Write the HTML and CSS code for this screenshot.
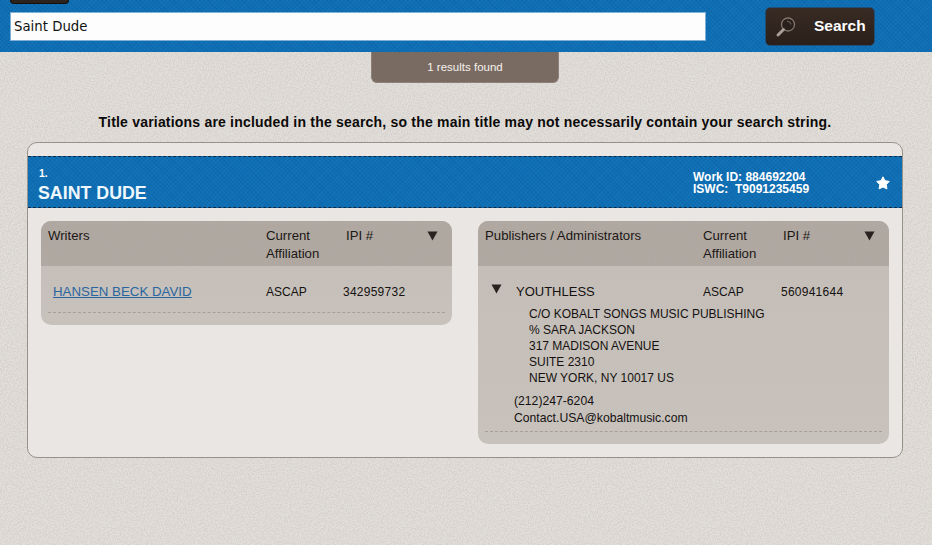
FILE: index.html
```html
<!DOCTYPE html>
<html lang="en">
<head>
<meta charset="utf-8">
<title>Saint Dude - Search</title>
<link rel="stylesheet" href="styles.css">
</head>
<body>
<header class="topbar">
  <div class="top-tab"></div>
  <form class="search-row">
    <input class="search-input" type="text" value="Saint Dude">
    <button class="search-btn" type="button">
      <svg class="lens" width="22" height="24" viewBox="0 0 22 24">
        <circle cx="13" cy="9.500" r="6.500" fill="#2a201b" stroke="#80766e" stroke-width="1.300"/>
        <path d="M12 6.500a3.500 3.500 0 0 1 4 3" fill="none" stroke="#665c55" stroke-width="1.200"/>
        <path d="M8.500 14.500 3 20" stroke="#a89f96" stroke-width="3" stroke-linecap="round"/>
      </svg>
      <span>Search</span>
    </button>
  </form>
</header>
<div class="results-wrap"><div class="results-tab">1 results found</div></div>
<p class="notice">Title variations are included in the search, so the main title may not necessarily contain your search string.</p>
<main class="card">
  <section class="band">
    <div class="band-title">
      <div class="num">1.</div>
      <h1>SAINT DUDE</h1>
    </div>
    <div class="ids">
      <div>Work ID: 884692204</div>
      <div>ISWC:&nbsp; T9091235459</div>
    </div>
    <svg class="star" width="14" height="14" viewBox="0 0 14 14"><path d="M7 .8 9 4.700l4.300.7-3 3.100.6 4.400L7 11l-3.900 1.900.6-4.400-3-3.100L5 4.700z" fill="#fff" stroke="#fff" stroke-linejoin="round"/></svg>
  </section>
  <div class="panels">
    <section class="panel">
      <div class="panel-head">
        <div class="h-name">Writers</div>
        <div class="h-aff">Current<br>Affiliation</div>
        <div class="h-ipi">IPI #</div>
        <svg class="tri" width="11" height="10" viewBox="0 0 12 10" preserveAspectRatio="none"><path d="M.5 .5h11L6 9.500z" fill="#2a221e"/></svg>
      </div>
      <div class="panel-body">
        <div class="row">
          <a class="writer" href="#">HANSEN BECK DAVID</a>
          <div class="aff">ASCAP</div>
          <div class="ipi">342959732</div>
        </div>
      </div>
    </section>
    <section class="panel">
      <div class="panel-head">
        <div class="h-name">Publishers / Administrators</div>
        <div class="h-aff">Current<br>Affiliation</div>
        <div class="h-ipi">IPI #</div>
        <svg class="tri" width="11" height="10" viewBox="0 0 12 10" preserveAspectRatio="none"><path d="M.5 .5h11L6 9.500z" fill="#2a221e"/></svg>
      </div>
      <div class="panel-body">
        <div class="row pub-row">
          <svg class="tri-small" width="11" height="10" viewBox="0 0 12 10" preserveAspectRatio="none"><path d="M.5 .5h11L6 9.500z" fill="#2a221e"/></svg>
          <div class="pub-name">YOUTHLESS</div>
          <div class="aff">ASCAP</div>
          <div class="ipi">560941644</div>
        </div>
        <address class="addr">C/O KOBALT SONGS MUSIC PUBLISHING<br>% SARA JACKSON<br>317 MADISON AVENUE<br>SUITE 2310<br>NEW YORK, NY 10017 US</address>
        <div class="contact">(212)247-6204<br>Contact.USA@kobaltmusic.com</div>
      </div>
    </section>
  </div>
</main>
</body>
</html>
```
FILE: styles.css
```css
* { box-sizing: border-box; }

html, body { margin: 0; height: 100%; }

body {
  height: 545px;
  overflow: hidden;
  font-family: "Liberation Sans", Arial, sans-serif;
  color: #111;
  background-color: #e2deda;
  background-image: url("data:image/svg+xml,%3Csvg xmlns='http://www.w3.org/2000/svg' width='300' height='300'%3E%3Cfilter id='n'%3E%3CfeTurbulence type='fractalNoise' baseFrequency='.7' numOctaves='2' stitchTiles='stitch'/%3E%3CfeColorMatrix values='0 0 0 0 .55 0 0 0 0 .52 0 0 0 0 .48 3.5 0 0 0 -1.35'/%3E%3C/filter%3E%3Crect width='300' height='300' filter='url(%23n)' opacity='.4'/%3E%3C/svg%3E");
}

.topbar,
.band {
  background-color: #0f6fb4;
  background-image:
    repeating-linear-gradient(45deg, rgba(5, 70, 130, .16) 0 1px, transparent 1px 3px),
    repeating-linear-gradient(-45deg, rgba(60, 140, 205, .12) 0 1px, transparent 1px 3px);
}

.topbar {
  height: 52px;
  padding: 0 0 6px 10px;
}

.top-tab {
  width: 59px;
  height: 4px;
  background: #2d231e;
  border: 1px solid #14100e;
  border-top: 0;
  border-radius: 0 0 4px 4px;
}

.search-row {
  display: flex;
  align-items: center;
  margin-top: 3px;
  height: 39px;
}

.search-input {
  width: 696px;
  height: 29px;
  padding: 0 3px;
  font-family: "DejaVu Sans", sans-serif;
  font-size: 13.300px;
  color: #111;
  background: #fdfdfd;
  border: 1px solid #7fb0d3;
  outline: 0;
}

.search-btn {
  display: flex;
  align-items: center;
  width: 110px;
  height: 39px;
  margin-left: 59px;
  padding: 0 0 0 9px;
  color: #fff;
  font-family: "Liberation Sans", Arial, sans-serif;
  font-size: 15.500px;
  font-weight: bold;
  background: linear-gradient(#382b24, #2a1f1a);
  border: 1px solid #1f4f78;
  border-radius: 5px;
}

.lens { flex: none; }

.search-btn span {
  margin: -2px 0 0 17px;
}

.results-wrap {
  display: flex;
  justify-content: center;
  padding-right: 2px;
}

.results-tab {
  width: 188px;
  height: 31px;
  font-size: 11.500px;
  line-height: 31px;
  text-align: center;
  color: #f4f1ee;
  background: #7a6b62;
  border: 1px solid #8d8178;
  border-top: 0;
  border-radius: 0 0 6px 6px;
}

.notice {
  margin: 31px 2px 0 0;
  font-size: 14px;
  font-weight: bold;
  line-height: 16px;
  letter-spacing: 0.200px;
  text-align: center;
  color: #0c0a09;
}

.card {
  width: 876px;
  height: 316px;
  margin: 12px 0 0 27px;
  padding-top: 13px;
  background: #e9e6e3;
  border: 1px solid #96918b;
  border-radius: 10px;
}

.band {
  display: flex;
  align-items: flex-start;
  height: 52px;
  color: #fff;
  border-top: 1px dashed #0b2a45;
  border-bottom: 1px dashed #0b2a45;
}

.band-title {
  width: 665px;
  padding: 10px 0 0 10px;
}

.num {
  padding-left: 1px;
  font-size: 10.500px;
  font-weight: bold;
  line-height: 12px;
}

h1 {
  margin: 4px 0 0;
  font-size: 17.800px;
  font-weight: bold;
  line-height: 20px;
  color: #eef7fc;
}

.ids {
  width: 183px;
  padding-top: 14px;
  font-size: 12px;
  font-weight: bold;
  line-height: 12px;
  letter-spacing: 0;
}

.star {
  margin-top: 19px;
  flex: none;
}

.panels {
  display: flex;
  align-items: flex-start;
  gap: 26px;
  padding: 13px 13px 0;
}

.panel {
  width: 411px;
  padding-bottom: 12px;
  border-radius: 10px;
  overflow: hidden;
  font-size: 12.500px;
  background: linear-gradient(#c4bdb7, #c8c2bc);
}

.panel-head {
  position: relative;
  display: flex;
  height: 45px;
  padding: 6px 7px 0;
  font-size: 13.200px;
  line-height: 18px;
  color: #1b1715;
  background-color: #b0a8a1;
  background-image: url("data:image/svg+xml,%3Csvg xmlns='http://www.w3.org/2000/svg' width='200' height='60'%3E%3Cfilter id='n'%3E%3CfeTurbulence type='fractalNoise' baseFrequency='.7' numOctaves='2' stitchTiles='stitch'/%3E%3CfeColorMatrix values='0 0 0 0 .4 0 0 0 0 .37 0 0 0 0 .34 3.5 0 0 0 -1.35'/%3E%3C/filter%3E%3Crect width='200' height='60' filter='url(%23n)' opacity='.3'/%3E%3C/svg%3E");
}

.h-name { width: 218px; }

.h-aff { width: 80px; }

.tri {
  position: absolute;
  top: 10px;
  right: 14px;
}

.panel-body {
  margin: 0 7px;
  border-bottom: 1px dashed #a69e97;
  color: #141110;
}

.row {
  display: flex;
  align-items: center;
  height: 46px;
  padding-top: 5px;
}

.writer {
  width: 218px;
  padding-left: 5px;
  color: #2a659f;
  font-size: 13.300px;
  text-decoration: underline;
}

.aff {
  width: 77px;
  font-size: 12px;
}

.ipi {
  font-size: 12px;
  letter-spacing: 0.250px;
}

.pub-row {
  height: 36px;
  padding-top: 15px;
}

.pub-row .ipi { margin-left: 1px; }

.tri-small {
  flex: none;
  margin: -6px 0 0 6px;
}

.pub-name {
  width: 187px;
  margin-left: 14px;
  font-size: 13px;
}

.addr {
  margin: 0 0 0 44px;
  padding-top: 4px;
  font-size: 12px;
  font-style: normal;
  line-height: 16px;
}

.contact {
  margin: 7px 0 4px 29px;
  font-size: 12.200px;
  line-height: 17px;
}
```
